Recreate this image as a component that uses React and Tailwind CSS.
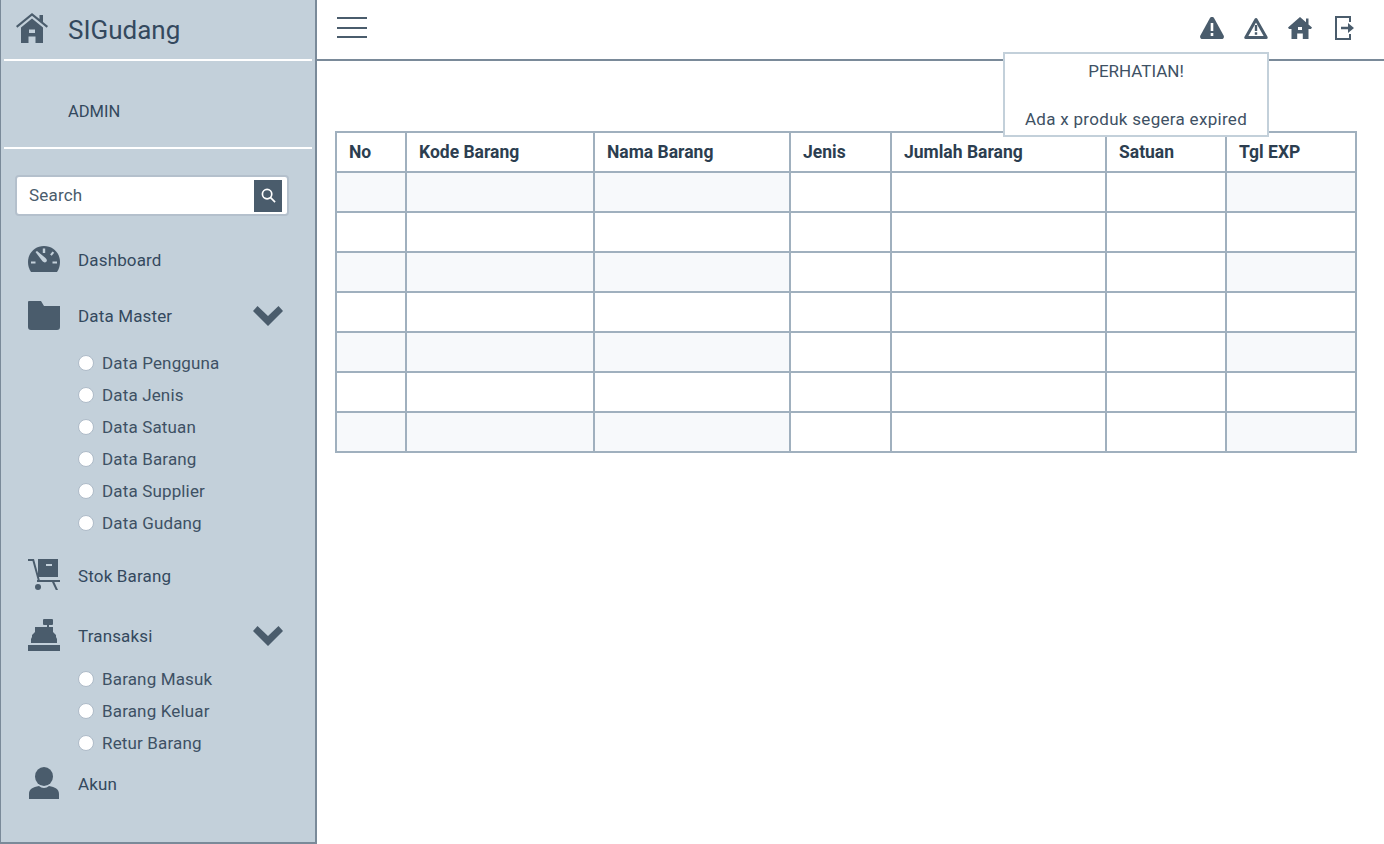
const font = "font-['Roboto',sans-serif]";

const masterItems = ["Data Pengguna", "Data Jenis", "Data Satuan", "Data Barang", "Data Supplier", "Data Gudang"];
const transaksiItems = ["Barang Masuk", "Barang Keluar", "Retur Barang"];
const columns = [
  { label: "No", width: "w-[70px]" },
  { label: "Kode Barang", width: "w-[188px]" },
  { label: "Nama Barang", width: "w-[196px]" },
  { label: "Jenis", width: "w-[101px]" },
  { label: "Jumlah Barang", width: "w-[215px]" },
  { label: "Satuan", width: "w-[120px]" },
  { label: "Tgl EXP", width: "w-[130px]" },
];
const rows = [0, 1, 2, 3, 4, 5, 6];

function HomeIcon() {
  return (
    <svg viewBox="0 0 32 30" className="w-8 h-[30px] mb-1" fill="#4a5c6c">
      <path d="M16 0 0 13l1.300 1.800L16 2.800l14.700 12L32 13l-5-4V2h-3.500v4z" />
      <path fillRule="evenodd" d="M16 5.500 5 14.500V30h7.500v-6.500h7V30H27V14.500zM13 16.500h6v3.500h-6z" />
    </svg>
  );
}

function SolidHomeIcon() {
  return (
    <svg viewBox="0 0 24 22" className="w-6 h-[22px]" fill="#4a5c6c">
      <path fillRule="evenodd" d="M12 0 0 10.500l1 1.500h2.500v10h5.700v-5.500h5.600V22h5.700V12H23l1-1.500-3.500-3V1.500H18v3.800zM10 10h4v3h-4z" />
    </svg>
  );
}

function GaugeIcon() {
  return (
    <svg viewBox="0 0 32 26" className="w-8 h-[26px]" fill="#4a5c6c">
      <path d="M16 0C7 0 0 7 0 16c0 3.600 1 7 3 10h26c2-3 3-6.400 3-10C32 7 25 0 16 0z" />
      <path d="M14.800 2.500h2.400V7h-2.400zM3 15.500h4.500v2H3zM24.500 15.500H29v2h-4.500zM24.500 5.500l1.700 1.300-2.500 3-1.600-1.300zM7.500 6 9 5l8.500 7c1.500 1.200 1.800 2.800.8 3.800s-2.600.8-3.800-.5z" fill="#c3d0da" />
    </svg>
  );
}

function FolderIcon() {
  return (
    <svg viewBox="0 0 32 29" className="w-8 h-[29px]" fill="#4a5c6c">
      <path d="M1 0h12l3 5h16v21a3 3 0 0 1-3 3H3a3 3 0 0 1-3-3V1a1 1 0 0 1 1-1z" />
    </svg>
  );
}

function CartIcon() {
  return (
    <svg viewBox="0 0 32 32" className="w-8 h-8" fill="#4a5c6c">
      <path fillRule="evenodd" d="M10 0h20v18H10zM18 5v2h6V5z" />
      <path d="M0 0h6l6 22H10L4.500 2H0z" />
      <path d="M9 21h23v2H9z" />
      <path d="M24 23h2.300l3.700 8h-2.200z" />
      <circle cx="10" cy="28" r="3" />
    </svg>
  );
}

function RegisterIcon() {
  return (
    <svg viewBox="0 0 32 32" className="w-8 h-8" fill="#4a5c6c">
      <path d="M15 1a1 1 0 0 1 1-1h8a1 1 0 0 1 1 1v4a1 1 0 0 1-1 1h-3v2h-2V6h-3a1 1 0 0 1-1-1z" />
      <path d="M7 8h18v5l3 3v2l1 2v4H3v-4l1-2v-2l3-3z" />
      <path d="M0 26h32v6H0z" />
    </svg>
  );
}

function UserIcon() {
  return (
    <svg viewBox="0 0 32 32" className="w-8 h-8" fill="#4a5c6c">
      <ellipse cx="16" cy="9.500" rx="9" ry="9.500" />
      <path d="M11 19c1.500 1.300 3 2 5 2s3.500-.7 5-2c6 1 10 3 10 8v5H1v-5c0-5 4-7 10-8z" />
    </svg>
  );
}

function Chevron() {
  return (
    <svg viewBox="0 0 30 20" className="w-[30px] h-5" fill="#4a5c6c">
      <path d="M4.500 0 15 10 25.500 0 30 5 15 20 0 5z" />
    </svg>
  );
}

function NavRow({ icon, label, chevron, className }) {
  return (
    <div className={`flex items-center pl-[27px] ${className}`}>
      <span className="w-[50px] flex justify-start">{icon}</span>
      <span className="flex-1 pt-[2px] text-[17px] tracking-[0.15px] leading-6 text-[#34495e]">{label}</span>
      {chevron && <span className="mr-[32px] pt-[2px]"><Chevron /></span>}
    </div>
  );
}

function SubMenu({ items }) {
  return (
    <div className="flex flex-col pl-[77px]">
      {items.map((item) => (
        <div key={item} className="flex items-center h-8 gap-2">
          <span className="w-4 h-4 rounded-full bg-white border border-[#aebbc8]"></span>
          <span className="text-[17px] tracking-[0.15px] text-[#3e5164] leading-6">{item}</span>
        </div>
      ))}
    </div>
  );
}

function Sidebar() {
  return (
    <aside className="w-[317px] h-[844px] shrink-0 bg-[#c3d0da] border-l border-b-2 border-r-2 border-[#7a8a99] flex flex-col">
      <div className="h-[61px] mx-[3px] border-b-2 border-white flex items-center pl-3">
        <HomeIcon />
        <span className="ml-[20px] mt-[2px] text-[26px] text-[#34495e]">SIGudang</span>
      </div>
      <div className="h-[88px] mx-[3px] border-b-2 border-white flex items-center pl-[64px] pt-4">
        <span className="text-[16.500px] text-[#34495e]">ADMIN</span>
      </div>
      <div className="mt-[26px] ml-[14px] w-[274px] h-[41px] bg-white rounded-[4px] border-2 border-[#b4c0cc] flex items-center justify-between pl-3 pr-[5px]">
        <span className="text-[17px] text-[#4a5c6c] tracking-[0.2px]">Search</span>
        <span className="w-7 h-8 bg-[#4a5c6c] flex items-center justify-center">
          <svg viewBox="0 0 16 16" className="w-[15px] h-[15px]" fill="none" stroke="white" strokeWidth="1.800">
            <circle cx="6.500" cy="6.500" r="5" />
            <path d="m10 10 5 5" />
          </svg>
        </span>
      </div>
      <NavRow icon={<GaugeIcon />} label="Dashboard" className="mt-[30px] h-[26px]" />
      <NavRow icon={<FolderIcon />} label="Data Master" chevron className="mt-7 h-[30px]" />
      <div className="mt-[17px]"><SubMenu items={masterItems} /></div>
      <NavRow icon={<CartIcon />} label="Stok Barang" className="mt-5 h-8" />
      <NavRow icon={<RegisterIcon />} label="Transaksi" chevron className="mt-7 h-8" />
      <div className="mt-3"><SubMenu items={transaksiItems} /></div>
      <NavRow icon={<UserIcon />} label="Akun" className="mt-2 h-8" />
    </aside>
  );
}

function TopBar() {
  return (
    <header className="relative h-[61px] border-b-2 border-[#7a8a99] flex items-center justify-between pl-5 pr-[29px]">
      <div className="flex flex-col gap-[7.500px] -mt-[4px]">
        <span className="block w-[30px] h-0.5 bg-[#4a5c6c]"></span>
        <span className="block w-[30px] h-0.5 bg-[#4a5c6c]"></span>
        <span className="block w-[30px] h-0.5 bg-[#4a5c6c]"></span>
      </div>
      <div className="flex items-center gap-5 -mt-[3px]">
        <svg viewBox="0 0 24 22" className="w-6 h-[22px]">
          <path d="M12 0c1 0 1.800.5 2.300 1.400l9.300 17c.9 1.700-.2 3.600-2.100 3.600H2.500C.6 22-.5 20.100.4 18.400l9.300-17C10.200.5 11 0 12 0z" fill="#4a5c6c" />
          <path d="M10.700 6h2.600v8h-2.600zM10.700 16h2.600v3h-2.600z" fill="#fff" />
        </svg>
        <svg viewBox="0 0 24 22" className="w-6 h-[22px]" fill="none">
          <path d="M12 2.500 1.800 20.500h20.400z" stroke="#4a5c6c" strokeWidth="3" strokeLinejoin="round" />
          <path d="M10.800 8h2.400v6h-2.400zM10.800 15.300h2.400v2.400h-2.400z" fill="#4a5c6c" />
        </svg>
        <SolidHomeIcon />
        <svg viewBox="0 0 20 24" className="w-5 h-6 ml-[3px]" fill="none">
          <path d="M15 6V1H1v22h14v-5" stroke="#4a5c6c" strokeWidth="2" />
          <path d="M6 10.800h7V7l6 5-6 5v-3.800H6z" fill="#4a5c6c" />
        </svg>
      </div>
    </header>
  );
}

function DataTable() {
  return (
    <table className="table-fixed border-collapse w-[1022px]">
      <thead>
        <tr className="h-10">
          {columns.map((col) => (
            <th key={col.label} className={`${col.width} border-2 border-[#a0b0be] text-left pl-3 text-[17.500px] font-bold text-[#2c3e50]`}>
              {col.label}
            </th>
          ))}
        </tr>
      </thead>
      <tbody>
        {rows.map((row) => (
          <tr key={row} className="h-10">
            {columns.map((col, i) => (
              <td
                key={col.label}
                className={`border-2 border-[#a0b0be] ${row % 2 === 0 && (i < 3 || i === 6) ? "bg-[#f7f9fb]" : "bg-white"}`}
              ></td>
            ))}
          </tr>
        ))}
      </tbody>
    </table>
  );
}

export default function App() {
  return (
    <div className={`flex w-[1384px] h-[844px] overflow-hidden bg-white ${font}`}>
      <Sidebar />
      <main className="relative flex-1">
        <TopBar />
        <div className="mt-[70px] ml-[18px]">
          <DataTable />
        </div>
        <div className="absolute left-[686px] top-[52px] w-[266px] h-[85px] bg-white border-2 border-[#c3d0da] text-center text-[17px] text-[#3e5164] leading-6 pt-[5px]">
          <div>PERHATIAN!</div>
          <div className="mt-6 tracking-[0.3px]">Ada x produk segera expired</div>
        </div>
      </main>
    </div>
  );
}
